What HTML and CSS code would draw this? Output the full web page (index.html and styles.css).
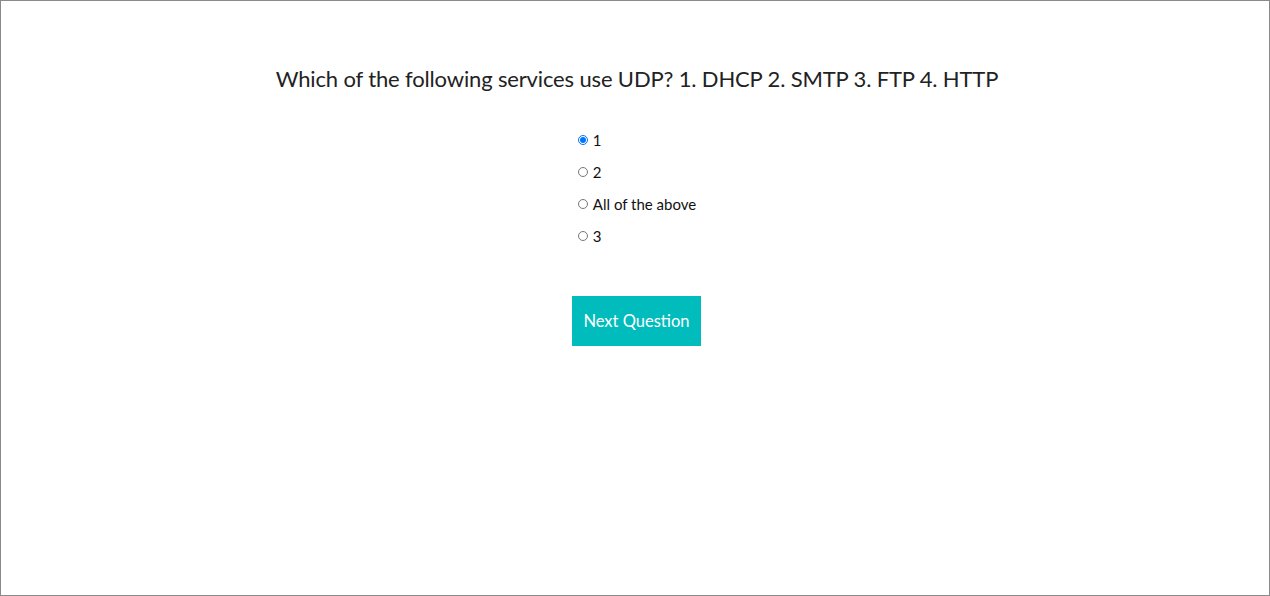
FILE: index.html
```html
<!DOCTYPE html>
<html>
<head>
<meta charset="utf-8">
<link rel="stylesheet" href="styles.css">
</head>
<body>
<div class="frame">
  <h1 class="question">Which of the following services use UDP? 1. DHCP 2. SMTP 3. FTP 4. HTTP</h1>
  <div class="options">
    <label class="option"><input type="radio" name="q" checked><span>1</span></label>
    <label class="option"><input type="radio" name="q"><span>2</span></label>
    <label class="option"><input type="radio" name="q"><span>All of the above</span></label>
    <label class="option"><input type="radio" name="q"><span>3</span></label>
  </div>
  <div class="actions">
    <button class="next">Next Question</button>
  </div>
</div>
</body>
</html>
```
FILE: styles.css
```css
html, body {
  margin: 0;
  padding: 0;
  background: #fff;
}
.frame {
  box-sizing: border-box;
  width: 1270px;
  height: 596px;
  border: 1px solid #8a8a8a;
  font-family: "Lato", "Open Sans", sans-serif;
  color: #222;
  display: flex;
  flex-direction: column;
  align-items: center;
  padding-top: 63px;
}
.question {
  margin: 0;
  font-weight: 400;
  font-size: 22px;
  letter-spacing: -0.15px;
  line-height: 30px;
  text-align: center;
  padding-left: 4px;
}
.options {
  margin-top: 34px;
  display: flex;
  flex-direction: column;
  gap: 8px;
  padding-left: 4px;
}
.option {
  display: flex;
  align-items: center;
  height: 24px;
  font-size: 15px;
  color: #111;
}
.option input {
  width: 10px;
  height: 10px;
  margin: 0 5px 0 0;
}
.actions {
  margin-top: 48px;
  padding-left: 3px;
}
.next {
  border: none;
  background: #00bcbc;
  color: #fff;
  font-family: inherit;
  font-size: 16.5px;
  width: 129px;
  height: 50px;
  padding: 0;
  cursor: pointer;
  border-radius: 0;
}
```
